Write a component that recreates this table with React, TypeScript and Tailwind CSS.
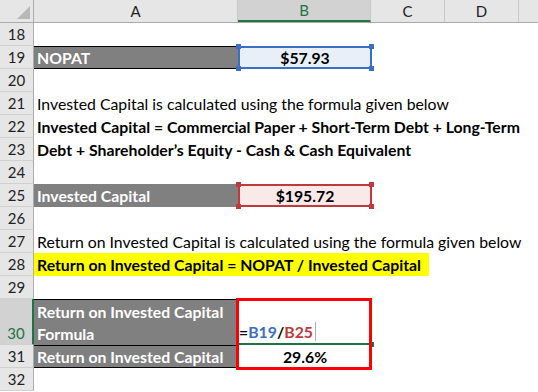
import React from "react";

const RowHead = ({ n, h = "h-[23px]", active = false }: { n: number; h?: string; active?: boolean }) => (
  <div
    className={`${h} w-[34px] shrink-0 flex items-end justify-center pb-[1px] border-b border-[#d0d0d0] text-[15px] ${
      active ? "bg-[#d2d2d2] text-[#217346] border-r-2 border-r-[#217346]" : "bg-[#e6e6e6] text-[#222] border-r border-r-[#ababab]"
    }`}
  >
    <span className="leading-[20px]">{n}</span>
  </div>
);

const Handle = ({ pos, color }: { pos: string; color: string }) => (
  <div className={`absolute w-[5px] h-[5px] ${pos} ${color}`} />
);

export default function App() {
  const font = "font-['Lato','Liberation_Sans',sans-serif]";
  return (
    <div className={`relative w-[538px] h-[392px] overflow-hidden bg-white text-[15.8px] text-black ${font}`}>
      {/* column header */}
      <div className="flex h-[23px] bg-[#e6e6e6] border-b border-[#ababab] text-[#222] text-[15px]">
        <div className="relative w-[34px] shrink-0 border-r border-[#ababab]">
          <svg className="absolute right-[3px] bottom-[3px]" width="13" height="13" viewBox="0 0 13 13">
            <polygon points="13,0 13,13 0,13" fill="#b8b8b8" />
          </svg>
        </div>
        <div className="w-[204px] shrink-0 border-r border-[#c8c8c8] flex items-center justify-center">A</div>
        <div className="w-[133px] shrink-0 bg-[#d2d2d2] border-r border-[#c8c8c8] border-b-2 border-b-[#217346] flex items-center justify-center text-[#217346]">
          B
        </div>
        <div className="w-[74px] shrink-0 border-r border-[#c8c8c8] flex items-center justify-center">C</div>
        <div className="w-[74px] shrink-0 border-r border-[#c8c8c8] flex items-center justify-center">D</div>
        <div className="flex-1" />
      </div>

      {/* 18 */}
      <div className="flex">
        <RowHead n={18} />
      </div>
      {/* 19 */}
      <div className="flex h-[23px]">
        <RowHead n={19} />
        <div className="w-[204px] shrink-0 bg-[#808080] border-y border-black text-white font-bold pl-[3px] flex items-center">
          NOPAT
        </div>
        <div className="relative w-[134px] shrink-0 bg-[#e9eff8] border-2 border-[#3a6fc5] flex items-center justify-center font-bold">
          $57.93
          <Handle pos="-left-[4px] -top-[4px]" color="bg-[#3a6fc5]" />
          <Handle pos="-right-[4px] -top-[4px]" color="bg-[#3a6fc5]" />
          <Handle pos="-left-[4px] -bottom-[4px]" color="bg-[#3a6fc5]" />
          <Handle pos="-right-[4px] -bottom-[4px]" color="bg-[#3a6fc5]" />
        </div>
      </div>
      {/* 20 */}
      <div className="flex">
        <RowHead n={20} />
      </div>
      {/* 21 */}
      <div className="flex">
        <RowHead n={21} />
        <div className="pl-[3px] flex items-end pb-[1px] whitespace-nowrap leading-[20px]">
          Invested Capital is calculated using the formula given below
        </div>
      </div>
      {/* 22 */}
      <div className="flex">
        <RowHead n={22} />
        <div className="pl-[3px] flex items-end pb-[1px] whitespace-nowrap leading-[20px] font-bold">
          Invested Capital = Commercial Paper + Short-Term Debt + Long-Term
        </div>
      </div>
      {/* 23 */}
      <div className="flex">
        <RowHead n={23} />
        <div className="pl-[3px] flex items-end pb-[1px] whitespace-nowrap leading-[20px] font-bold">
          Debt + Shareholder’s Equity - Cash &amp; Cash Equivalent
        </div>
      </div>
      {/* 24 */}
      <div className="flex">
        <RowHead n={24} />
      </div>
      {/* 25 */}
      <div className="flex h-[23px]">
        <RowHead n={25} />
        <div className="w-[204px] shrink-0 bg-[#808080] text-white font-bold pl-[3px] flex items-center">
          Invested Capital
        </div>
        <div className="relative w-[134px] shrink-0 bg-[#f9e9e9] border-2 border-[#c0393b] flex items-center justify-center font-bold">
          $195.72
          <Handle pos="-left-[4px] -top-[4px]" color="bg-[#c0393b]" />
          <Handle pos="-right-[4px] -top-[4px]" color="bg-[#c0393b]" />
          <Handle pos="-left-[4px] -bottom-[4px]" color="bg-[#c0393b]" />
          <Handle pos="-right-[4px] -bottom-[4px]" color="bg-[#c0393b]" />
        </div>
      </div>
      {/* 26 */}
      <div className="flex">
        <RowHead n={26} />
      </div>
      {/* 27 */}
      <div className="flex">
        <RowHead n={27} />
        <div className="pl-[3px] flex items-end pb-[1px] whitespace-nowrap leading-[20px]">
          Return on Invested Capital is calculated using the formula given below
        </div>
      </div>
      {/* 28 */}
      <div className="flex h-[23px]">
        <RowHead n={28} />
        <div className="w-[395px] bg-[#ffff00] pl-[3px] flex items-end pb-[1px] whitespace-nowrap leading-[20px] font-bold">
          Return on Invested Capital = NOPAT / Invested Capital
        </div>
      </div>
      {/* 29 */}
      <div className="flex">
        <RowHead n={29} />
      </div>
      {/* 30 */}
      <div className="flex h-[46px]">
        <RowHead n={30} h="h-[46px]" active />
        <div className="w-[204px] shrink-0 bg-[#808080] border-t border-black text-white font-bold pl-[3px] leading-[22px] pt-[1px]">
          Return on Invested Capital
          <br />
          Formula
        </div>
        <div className="relative w-[134px] shrink-0 flex items-end pb-[3px] pl-[1px] font-bold leading-[20px]">
          <span>=</span>
          <span className="text-[#3a6fc5]">B19</span>
          <span>/</span>
          <span className="text-[#c0393b]">B25</span>
          <span className="ml-[2px] w-px h-[19px] bg-[#b0b0b0] self-end mb-[1px]" />
          <div className="absolute left-0 right-0 bottom-0 h-[2px] bg-[#217346]" />
          <div className="absolute -right-[2px] -bottom-[2px] w-[4px] h-[5px] bg-[#217346]" />
        </div>
      </div>
      {/* 31 */}
      <div className="flex h-[23px]">
        <RowHead n={31} />
        <div className="w-[204px] shrink-0 bg-[#808080] border-y border-black text-white font-bold pl-[3px] flex items-center">
          Return on Invested Capital
        </div>
        <div className="w-[134px] shrink-0 flex items-center justify-center font-bold">29.6%</div>
      </div>
      {/* 32 */}
      <div className="flex">
        <RowHead n={32} />
      </div>

      {/* red annotation frame */}
      <div className="absolute left-[236px] top-[298px] w-[136px] h-[72px] border-[3px] border-[#ff0000]" />
    </div>
  );
}
